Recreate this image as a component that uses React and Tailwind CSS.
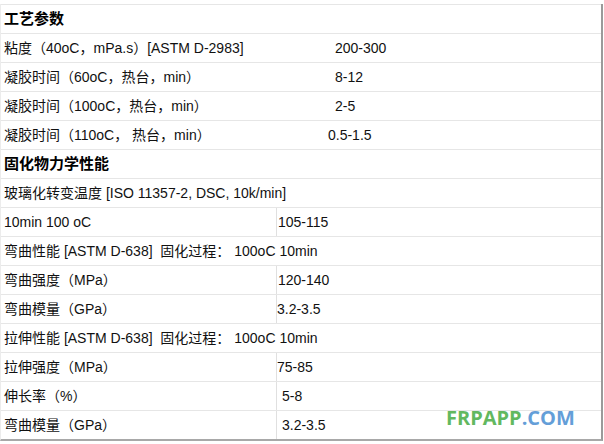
const sectionOne = [
  { label: "粘度（40oC，mPa.s）[ASTM D-2983]", value: "200-300", pad: "pl-[7px]" },
  { label: "凝胶时间（60oC，热台，min）", value: "8-12", pad: "pl-[7px]" },
  { label: "凝胶时间（100oC，热台，min）", value: "2-5", pad: "pl-[7px]" },
  { label: "凝胶时间（110oC， 热台，min）", value: "0.5-1.5", pad: "pl-0" },
];

const sectionTwo = [
  { label: "玻璃化转变温度 [ISO 11357-2, DSC, 10k/min]", span: true },
  { label: "10min 100 oC", value: "105-115", pad: "pl-[1px]" },
  { label: "弯曲性能 [ASTM D-638]  固化过程： 100oC 10min", span: true },
  { label: "弯曲强度（MPa）", value: "120-140", pad: "pl-[1px]" },
  { label: "弯曲模量（GPa）", value: "3.2-3.5", pad: "pl-0" },
  { label: "拉伸性能 [ASTM D-638]  固化过程： 100oC 10min", span: true },
  { label: "拉伸强度（MPa）", value: "75-85", pad: "pl-0" },
  { label: "伸长率（%）", value: "5-8", pad: "pl-[5px]" },
  { label: "弯曲模量（GPa）", value: "3.2-3.5", pad: "pl-[5px]" },
];

const Row = ({ children }) => (
  <div className="flex items-center h-[29px] border-t border-[#e6e6e6]">{children}</div>
);

const Heading = ({ text }) => (
  <Row>
    <span className="pl-[3px] text-[15px] font-bold text-black">{text}</span>
  </Row>
);

export default function App() {
  return (
    <div
      className="relative w-[604px] h-[444px] bg-white pt-[4px] text-[14px] text-[#111]"
      style={{ fontFamily: '"Liberation Sans", "Noto Sans CJK SC", sans-serif' }}
    >
      <div className="w-[603px] border-l border-l-[#ececec] border-r-2 border-r-[#9a9a9a] border-b-2 border-b-[#a8a8a8]">
        <Heading text="工艺参数" />
        {sectionOne.map((r) => (
          <Row key={r.label}>
            <div className="w-[327px] pl-[3px] whitespace-pre">{r.label}</div>
            <div className={r.pad}>{r.value}</div>
          </Row>
        ))}
        <Heading text="固化物力学性能" />
        {sectionTwo.map((r, i) =>
          r.span ? (
            <Row key={i}>
              <div className="pl-[3px] whitespace-pre">{r.label}</div>
            </Row>
          ) : (
            <div key={i} className="flex h-[29px] border-t border-[#e6e6e6]">
              <div className="w-[276px] flex items-center pl-[3px] border-r border-[#e0e0e0] whitespace-pre">
                {r.label}
              </div>
              <div className={`flex items-center ${r.pad}`}>{r.value}</div>
            </div>
          )
        )}
      </div>

      {/* watermark */}
      <div
        className="absolute left-[446px] top-[406px] text-[20px] leading-[24px] font-bold"
        style={{ fontFamily: '"Open Sans", sans-serif' }}
      >
        <span className="text-[#62b85f]">FRPAPP</span>
        <span className="text-[#649ed8]">.COM</span>
      </div>
    </div>
  );
}
